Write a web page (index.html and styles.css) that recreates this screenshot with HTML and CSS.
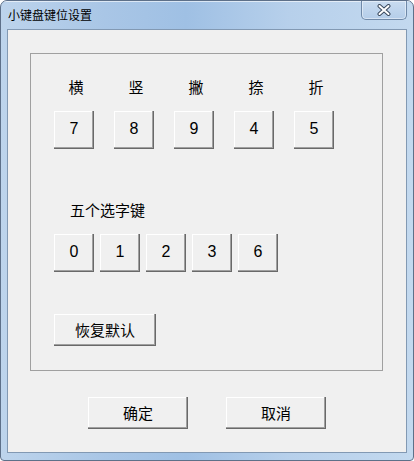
FILE: index.html
```html
<!DOCTYPE html>
<html>
<head>
<meta charset="utf-8">
<link rel="stylesheet" href="styles.css">
</head>
<body>
<div class="window">
  <div class="titlebar">
    <span class="title">小键盘键位设置</span>
    <div class="close">
      <svg width="14" height="12" viewBox="0 0 14 12">
        <path d="M2.5 2 L11.5 10 M11.5 2 L2.5 10" stroke="#3b4a5e" stroke-width="4" stroke-linecap="round" fill="none"/>
        <path d="M2.5 2 L11.5 10 M11.5 2 L2.5 10" stroke="#ffffff" stroke-width="2" stroke-linecap="round" fill="none"/>
      </svg>
    </div>
  </div>
  <div class="client">
    <div class="group">
      <div class="labels">
        <span>横</span><span>竖</span><span>撇</span><span>捺</span><span>折</span>
      </div>
      <div class="row row-wide">
        <div class="btn key">7</div>
        <div class="btn key">8</div>
        <div class="btn key">9</div>
        <div class="btn key">4</div>
        <div class="btn key">5</div>
      </div>
      <div class="caption">五个选字键</div>
      <div class="row row-tight">
        <div class="btn key">0</div>
        <div class="btn key">1</div>
        <div class="btn key">2</div>
        <div class="btn key">3</div>
        <div class="btn key">6</div>
      </div>
      <div class="btn reset">恢复默认</div>
    </div>
    <div class="footer">
      <div class="btn action">确定</div>
      <div class="btn action">取消</div>
    </div>
  </div>
</div>
</body>
</html>
```

FILE: styles.css
```css
html, body {
  margin: 0;
  padding: 0;
  background: #ffffff;
}

.window {
  width: 414px;
  height: 461px;
  box-sizing: border-box;
  border: 1px solid #5d7089;
  border-radius: 7px 7px 4px 4px;
  background: linear-gradient(to right, #bdd4ec 0%, #a9c6e6 25%, #9fc0e4 45%, #b7d0eb 70%, #c3d9ef 100%);
  display: flex;
  flex-direction: column;
  font-family: "Noto Sans CJK SC", "Liberation Sans", sans-serif;
  overflow: hidden;
}

.titlebar {
  height: 28px;
  display: flex;
  align-items: flex-start;
  padding: 0 6px 0 7px;
  box-shadow: inset 0 1px 0 rgba(255,255,255,0.6);
}

.title {
  font-size: 12px;
  line-height: 12px;
  margin-top: 8px;
  color: #000;
  flex: 1;
}

.close {
  width: 44px;
  height: 18px;
  border: 1px solid #6f89a8;
  border-top: none;
  border-radius: 0 0 5px 5px;
  background: linear-gradient(to bottom, #c9dcf0, #b4cde9);
  box-shadow: inset 0 0 0 1px rgba(255,255,255,0.45);
  display: flex;
  align-items: center;
  justify-content: center;
}

.client {
  flex: 1;
  margin: 0 6px 7px 6px;
  border: 1px solid #8299b3;
  background: #f0f0f0;
  display: flex;
  flex-direction: column;
}

.group {
  margin: 23px 0 0 22px;
  width: 353px;
  height: 318px;
  box-sizing: border-box;
  border: 1px solid #a0a0a0;
  display: flex;
  flex-direction: column;
  align-items: flex-start;
}

.labels {
  display: flex;
  gap: 20px;
  margin-top: 23px;
  padding-left: 25px;
  height: 20px;
}

.labels span {
  width: 40px;
  text-align: center;
  font-size: 15px;
  line-height: 20px;
  color: #000;
}

.row {
  display: flex;
  padding-left: 23px;
}

.row-wide {
  gap: 20px;
  margin-top: 14px;
}

.row-tight {
  gap: 6px;
  margin-top: 14px;
}

.caption {
  margin-top: 51px;
  padding-left: 39px;
  font-size: 15px;
  line-height: 20px;
  color: #000;
}

.btn {
  background: #f0f0f0;
  box-sizing: border-box;
  box-shadow: inset -1px -1px 0 #696969, inset -2px -2px 0 #a0a0a0, inset 1px 1px 0 #ffffff;
  display: flex;
  align-items: center;
  justify-content: center;
  color: #000;
}

.key {
  width: 40px;
  height: 38px;
  font-family: "Liberation Sans", sans-serif;
  font-size: 16px;
  padding-bottom: 2px;
}

.reset {
  width: 102px;
  height: 32px;
  margin: 42px 0 0 23px;
  font-size: 15px;
  padding-bottom: 2px;
}

.footer {
  display: flex;
  gap: 38px;
  margin-top: 26px;
  padding-left: 80px;
}

.action {
  width: 100px;
  height: 32px;
  font-size: 15px;
  padding-bottom: 2px;
}
```
